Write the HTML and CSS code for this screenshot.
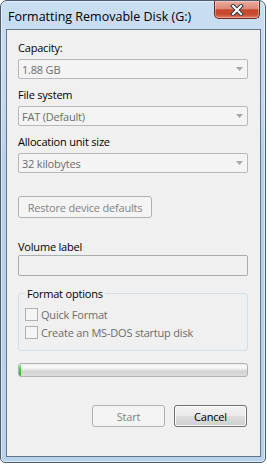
FILE: index.html
```html
<!DOCTYPE html>
<html>
<head>
    <meta charset="UTF-8">
    <title>Formatting Removable Disk (G:)</title>
    <link rel="stylesheet" href="styles.css">
</head>
<body>
    <div class="window">
        <div class="titlebar">
            <span class="title">Formatting Removable Disk (G:)</span>
            <button class="close-btn" title="Close">
                <svg width="14" height="12" viewBox="0 0 14 12">
                    <path d="M3 2 L11 10 M11 2 L3 10" stroke="#2f3a45" stroke-width="4" stroke-linecap="square"/>
                    <path d="M3 2 L11 10 M11 2 L3 10" stroke="#ffffff" stroke-width="2" stroke-linecap="square"/>
                </svg>
            </button>
        </div>

        <div class="client">
            <div class="label first">Capacity:</div>
            <div class="combo">
                <span>1.88 GB</span>
                <svg class="arrow" width="7" height="4" viewBox="0 0 7 4"><path d="M0 0 H7 L3.5 4 Z" fill="#a7a7a7"/></svg>
            </div>

            <div class="label">File system</div>
            <div class="combo">
                <span>FAT (Default)</span>
                <svg class="arrow" width="7" height="4" viewBox="0 0 7 4"><path d="M0 0 H7 L3.5 4 Z" fill="#a7a7a7"/></svg>
            </div>

            <div class="label">Allocation unit size</div>
            <div class="combo">
                <span>32 kilobytes</span>
                <svg class="arrow" width="7" height="4" viewBox="0 0 7 4"><path d="M0 0 H7 L3.5 4 Z" fill="#a7a7a7"/></svg>
            </div>

            <button class="btn disabled restore">Restore device defaults</button>

            <div class="label volume">Volume label</div>
            <div class="textbox"></div>

            <!-- Format options group -->
            <div class="group">
                <span class="group-title">Format options</span>
                <label class="check"><span class="box"></span>Quick Format</label>
                <label class="check"><span class="box"></span>Create an MS-DOS startup disk</label>
            </div>

            <div class="progress"><div class="progress-fill"></div></div>

            <div class="actions">
                <button class="btn disabled">Start</button>
                <button class="btn default">Cancel</button>
            </div>
        </div>
    </div>
</body>
</html>
```

FILE: styles.css
```css
* { box-sizing: border-box; margin: 0; padding: 0; }
body {
    background-color: #ffffff;
    font-family: "Open Sans", "Noto Sans", sans-serif;
    font-size: 11px;
    letter-spacing: -0.2px;
    color: #000;
}
.window {
    width: 266px;
    height: 463px;
    border: 1px solid #4d5d6e;
    border-radius: 7px 7px 5px 5px;
    background: linear-gradient(to bottom, #cadef2 0%, #c4d9ef 22%, #b8d1eb 34%, #b9d2ec 100%);
    box-shadow: inset 0 0 0 1px rgba(255,255,255,0.55);
    display: flex;
    flex-direction: column;
    padding: 0 4px 5px 5px;
}
.titlebar {
    height: 28px;
    display: flex;
    align-items: flex-start;
}
.title {
    padding: 8px 0 0 2px;
    font-size: 12.5px;
    letter-spacing: 0;
    line-height: 16px;
}
.close-btn {
    margin-left: auto;
    margin-right: 1px;
    width: 46px;
    height: 18px;
    border: 1px solid #6b2b22;
    border-top: none;
    border-radius: 0 0 5px 5px;
    background: linear-gradient(to bottom, #e9ab9d 0%, #dc8a77 45%, #c8472e 52%, #c64a31 78%, #e07d5f 100%);
    box-shadow: inset 0 0 0 1px rgba(255,255,255,0.35);
    display: flex;
    align-items: center;
    justify-content: center;
}
.client {
    flex: 1;
    background-color: #f0f0f0;
    border: 1px solid #64768a;
    padding: 0 12px 0 11px;
    display: flex;
    flex-direction: column;
}
.label { line-height: 15px; margin-top: 7px; }
.label.first { margin-top: 10px; }
.label.volume { margin-top: 21px; }
.combo {
    margin-top: 4px;
    height: 20px;
    border: 1px solid #b9b9b9;
    border-radius: 2px;
    background-color: #f4f4f4;
    color: #6d6d6d;
    display: flex;
    align-items: center;
    padding: 0 4px 0 3px;
}
.combo .arrow { margin-left: auto; }
.combo + .label { margin-top: 8px; }
.btn {
    font-family: inherit;
    font-size: 11px;
    letter-spacing: -0.2px;
    height: 22px;
    border-radius: 3px;
    background-color: #f4f4f4;
}
.btn.disabled {
    border: 1px solid #adb2b5;
    color: #838383;
}
.btn.default {
    border: 1px solid #707070;
    color: #000;
    background: linear-gradient(to bottom, #f2f2f2 0%, #ebebeb 48%, #dddddd 52%, #cfcfcf 100%);
    box-shadow: inset 0 0 0 1px #fbfbfb;
}
.restore {
    margin-top: 23px;
    width: 134px;
}
.textbox {
    margin-top: 1px;
    height: 21px;
    border: 1px solid #abadb3;
    border-radius: 2px;
    background-color: #f0f0f0;
}
.group {
    margin-top: 17px;
    border: 1px solid #d5dfe5;
    border-radius: 3px;
    padding: 0 0 10px 6px;
    display: flex;
    flex-direction: column;
}
.group-title {
    align-self: flex-start;
    margin: -8px 0 0 0;
    padding: 0 2px;
    line-height: 15px;
    background-color: #f0f0f0;
}
.check {
    display: flex;
    align-items: center;
    line-height: 15px;
    color: #6d6d6d;
    margin-top: 3px;
}
.group-title + .check { margin-top: 6px; }
.check .box {
    width: 13px;
    height: 13px;
    border: 1px solid #b1b1b1;
    background-color: #f4f4f4;
    margin-right: 3px;
}
.progress {
    margin-top: 12px;
    height: 14px;
    border: 1px solid #b2b2b2;
    border-radius: 3px;
    background: linear-gradient(to bottom, #eeeeee 0%, #fbfbfb 25%, #e4e4e4 50%, #d3d3d3 60%, #dcdcdc 100%);
    overflow: hidden;
}
.progress-fill {
    width: 2px;
    height: 100%;
    background: linear-gradient(to bottom, #bdf5b6 0%, #42d83a 40%, #1fbd1a 100%);
}
.actions {
    margin-top: 28px;
    display: flex;
    justify-content: flex-end;
    gap: 9px;
    padding-right: 1px;
}
.actions .btn { width: 73px; }
```
